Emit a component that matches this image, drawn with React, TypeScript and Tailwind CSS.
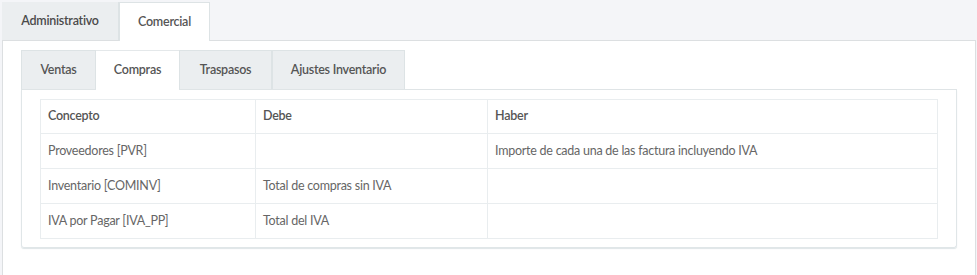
import React from 'react';

const outerTabs = [
  { name: 'Administrativo', active: false, w: 'w-[117px]' },
  { name: 'Comercial', active: true, w: 'w-[91px]' },
];

const innerTabs = [
  { name: 'Ventas', active: false, w: 'w-[75px]' },
  { name: 'Compras', active: true, w: 'w-[83px]' },
  { name: 'Traspasos', active: false, w: 'w-[93px]' },
  { name: 'Ajustes Inventario', active: false, w: 'w-[133px]' },
];

const rows = [
  { concepto: 'Proveedores [PVR]', debe: '', haber: 'Importe de cada una de las factura incluyendo IVA' },
  { concepto: 'Inventario [COMINV]', debe: 'Total de compras sin IVA', haber: '' },
  { concepto: 'IVA por Pagar [IVA_PP]', debe: 'Total del IVA', haber: '' },
];

export default function App() {
  return (
    <div className="w-[977px] h-[275px] overflow-hidden bg-[#f4f5f8] pl-[2px] pt-[2px] text-[12.5px] tracking-[-0.25px] text-[#555] [font-family:'Source_Sans_Pro',Lato,'Liberation_Sans',sans-serif]">
      <div className="flex h-[38px]">
        {outerTabs.map(t => (
          <div
            key={t.name}
            className={`${t.w} flex items-center justify-center font-semibold ${
              t.active
                ? 'bg-white border-x border-t border-[#dde3e5] h-[39px] relative z-10'
                : 'bg-[#ebeef0] border-r border-[#dde3e5] text-[#4a4a4a]'
            }`}
          >
            {t.name}
          </div>
        ))}
      </div>
      <div className="w-[974px] h-[240px] bg-white border-t border-x border-[#dcdfe1] pt-[9px] px-[18px]">
        <div className="flex h-[40px] border-b border-[#dfe4e6]">
          {innerTabs.map(t => (
            <div
              key={t.name}
              className={`${t.w} flex items-center justify-center font-semibold ${
                t.active
                  ? 'bg-white border-t border-[#e4e8ea] h-[40px]'
                  : 'bg-[#ebeef0] border border-[#dde3e5] border-b-0'
              }`}
            >
              {t.name}
            </div>
          ))}
        </div>
        <div className="border-x border-b border-[#e0e6e8] rounded-b-[3px] shadow-[0_1px_1px_rgba(180,195,200,0.45)] pt-[9px] pb-[8px] px-[18px]">
          <table className="w-full border-collapse text-[#666]">
            <colgroup>
              <col className="w-[215px]" />
              <col className="w-[232px]" />
              <col />
            </colgroup>
            <thead>
              <tr>
                {['Concepto', 'Debe', 'Haber'].map(h => (
                  <th key={h} className="h-[34px] border border-[#e9edef] px-[7px] text-left font-semibold text-[#555]">
                    {h}
                  </th>
                ))}
              </tr>
            </thead>
            <tbody>
              {rows.map(r => (
                <tr key={r.concepto}>
                  <td className="h-[35px] border border-[#e9edef] px-[7px]">{r.concepto}</td>
                  <td className="h-[35px] border border-[#e9edef] px-[7px]">{r.debe}</td>
                  <td className="h-[35px] border border-[#e9edef] px-[7px]">{r.haber}</td>
                </tr>
              ))}
            </tbody>
          </table>
        </div>
      </div>
    </div>
  );
}
